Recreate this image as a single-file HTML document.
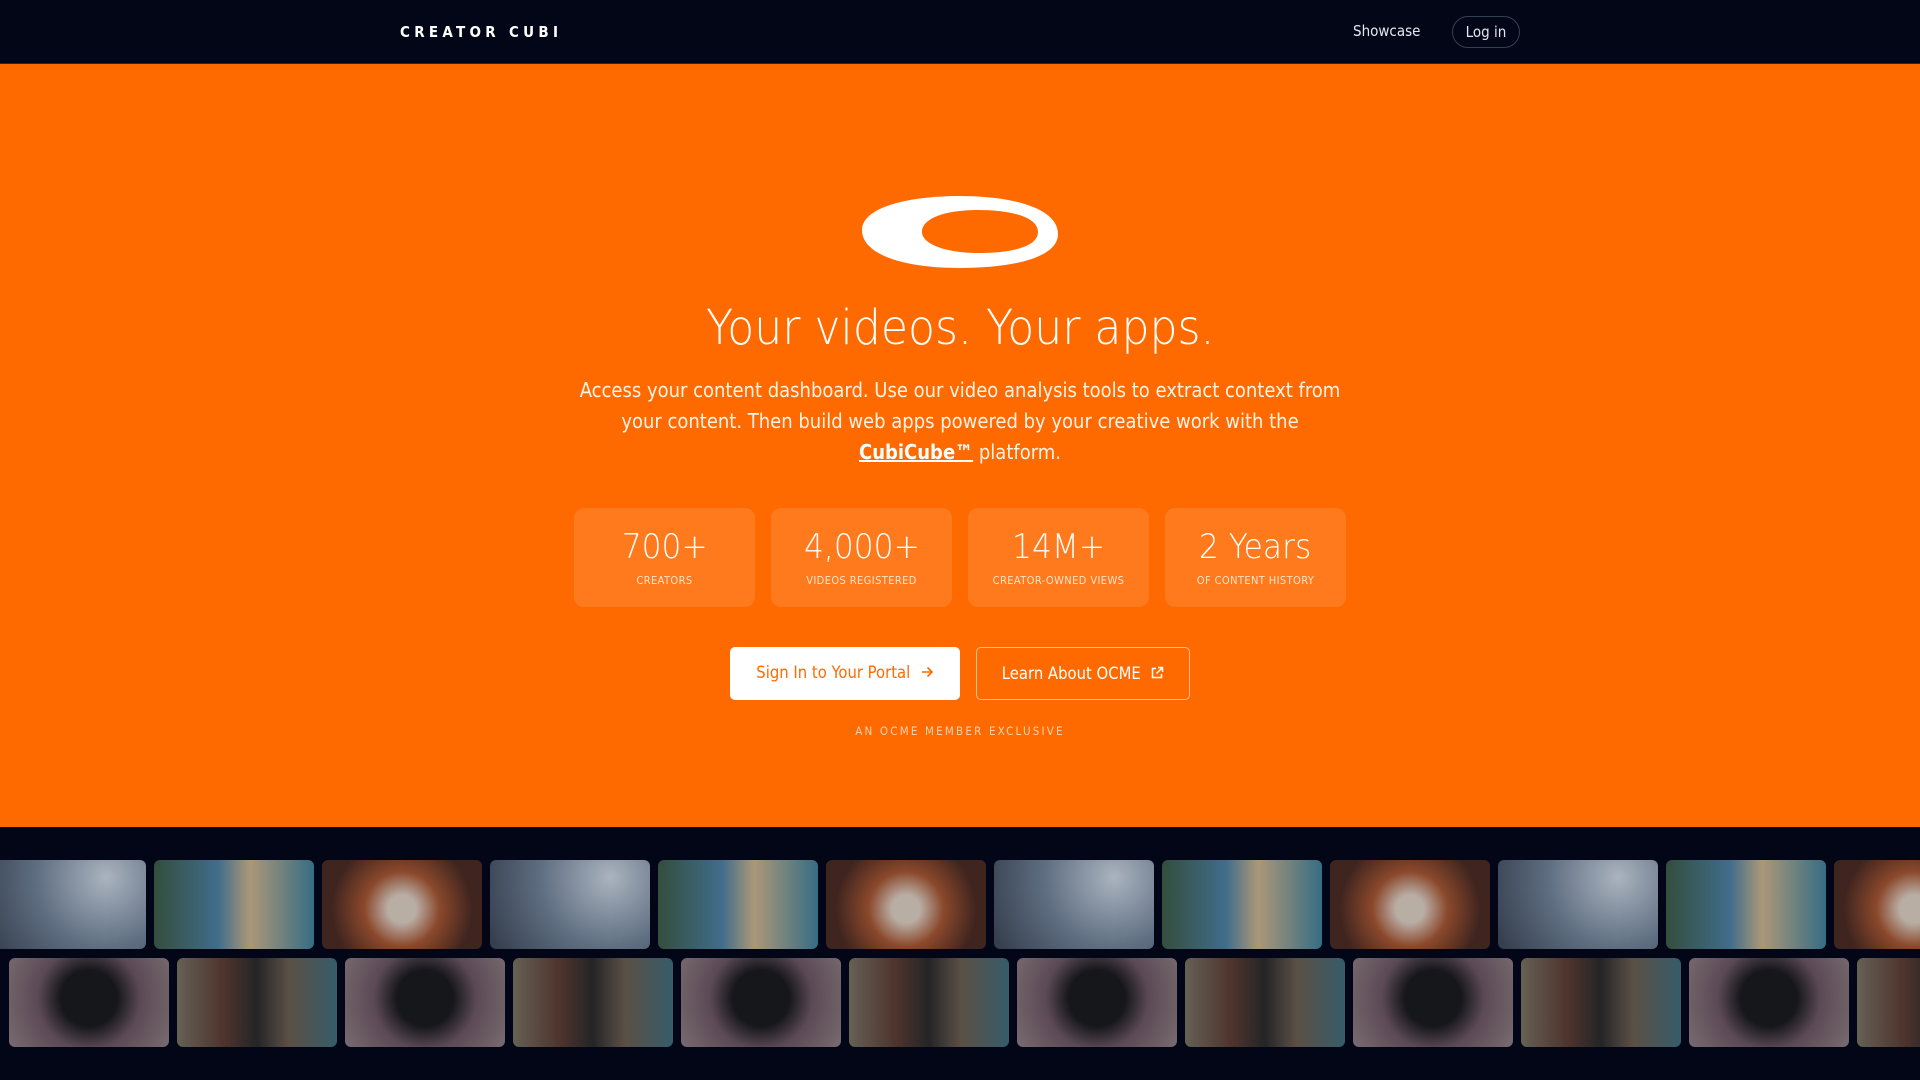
<!DOCTYPE html>
<html><head><meta charset="utf-8"><style>
*{margin:0;padding:0;box-sizing:border-box}
body{width:1920px;height:1080px;overflow:hidden;background:#020617;font-family:"DejaVu Sans Condensed","DejaVu Sans","Liberation Sans",sans-serif;font-stretch:condensed;color:#fff}
.nav{position:absolute;left:0;top:0;width:1920px;height:64px;background:#020617;border-bottom:1px solid #1e293b}
.brand{position:absolute;left:400px;top:23px;font-size:15px;font-weight:bold;letter-spacing:4.3px}
.show{position:absolute;left:1353px;top:22px;font-size:15px;color:#e2e8f0}
.login{position:absolute;left:1452px;top:16px;width:68px;height:32px;border:1px solid #334155;border-radius:16px;font-size:15px;text-align:center;line-height:30px;color:#e2e8f0}
.hero{position:absolute;left:0;top:64px;width:1920px;height:763px;background:#ff6a00}
.logo{position:absolute;left:862px;top:196px}
.light{font-family:"DejaVu Sans",sans-serif;font-stretch:normal;font-weight:200;display:inline-block;transform:scaleX(.92)}
h1{position:absolute;left:0;width:1920px;top:300px;text-align:center;font-weight:200;font-size:48px}
p.lead{position:absolute;left:575px;width:770px;top:375px;text-align:center;font-size:20px;line-height:31px;color:#fff3e8}
p.lead b{text-decoration:underline;color:#fff}
.stat{position:absolute;top:508px;width:181px;height:99px;background:rgba(255,255,255,.11);border-radius:10px;text-align:center}
.stat .n{margin-top:19px;font-size:34px;line-height:40px}
.stat .l{margin-top:7px;font-size:11px;color:#ffe3cc;letter-spacing:.4px}
.btn{position:absolute;top:647px;height:53px;border-radius:5px;font-size:16.5px;line-height:51px;text-align:center}
.b1{left:730px;width:230px;background:#fff;color:#ff6a00}
.b2{left:976px;width:214px;border:1px solid rgba(255,255,255,.55);color:#fff}
.excl{position:absolute;top:724px;left:0;width:1920px;text-align:center;font-size:11.5px;letter-spacing:2.2px;color:#ffd1ad}
.row{position:absolute;left:0;height:89px}
.t{position:absolute;top:0;width:160px;height:89px;border-radius:6px;opacity:.85}
.a{background:radial-gradient(circle at 75% 20%,#c8d2dc,#6f8094 50%,#3b4452)}
.b{background:linear-gradient(90deg,#3d5a44,#4b7fa0 40%,#c9b189 60%,#3f7f96)}
.c{background:radial-gradient(circle at 50% 55%,#d9cbbd 15%,#a3542f 40%,#4a2a20 75%)}
.d{background:radial-gradient(circle at 50% 45%,#1a1a1c 30%,#6b5660 55%,#8e7d80)}
.e{background:linear-gradient(90deg,#77705f,#5a3b2f 30%,#2a2a2a 50%,#6b5d4e 70%,#3f6b77)}
</style></head><body>
<div class="nav"><div class="brand">CREATOR CUBI</div><div class="show">Showcase</div><div class="login">Log in</div></div>
<div class="hero"></div>
<svg class="logo" width="196" height="72" viewBox="0 0 196 72"><path fill="#fff" fill-rule="evenodd" d="M98 0C150 0 196 12 196 38C196 62 150 72 98 72C40 72 0 58 0 34C0 12 44 0 98 0ZM60 36C60 48 84 57 116 57C152 57 176 50 176 36C176 22 152 14 116 14C84 14 60 22 60 36Z"/></svg>
<h1><span class="light">Your videos. Your apps.</span></h1>
<p class="lead">Access your content dashboard. Use our video analysis tools to extract context from your content. Then build web apps powered by your creative work with the <b>CubiCube™</b> platform.</p>
<div class="stat" style="left:574px"><div class="n"><span class="light">700+</span></div><div class="l">CREATORS</div></div>
<div class="stat" style="left:771px"><div class="n"><span class="light">4,000+</span></div><div class="l">VIDEOS REGISTERED</div></div>
<div class="stat" style="left:968px"><div class="n"><span class="light">14M+</span></div><div class="l">CREATOR-OWNED VIEWS</div></div>
<div class="stat" style="left:1165px"><div class="n"><span class="light">2 Years</span></div><div class="l">OF CONTENT HISTORY</div></div>
<div class="btn b1">Sign In to Your Portal &nbsp;<svg width="14" height="14" viewBox="0 0 14 14" style="vertical-align:-1px"><path d="M2 7H12M7.5 2.5L12 7L7.5 11.5" stroke="#ff6a00" stroke-width="1.6" fill="none"/></svg></div>
<div class="btn b2">Learn About OCME &nbsp;<svg width="14" height="14" viewBox="0 0 14 14" style="vertical-align:-1px"><path d="M6 2.5H2.5V11.5H11.5V8M8 1.5H12.5V6M12.5 1.5L6.5 7.5" stroke="#fff" stroke-width="1.5" fill="none"/></svg></div>
<div class="excl">AN OCME MEMBER EXCLUSIVE</div>
<div class="row" style="top:860px">
<div class="t a" style="left:-14px"></div><div class="t b" style="left:154px"></div><div class="t c" style="left:322px"></div><div class="t a" style="left:490px"></div><div class="t b" style="left:658px"></div><div class="t c" style="left:826px"></div><div class="t a" style="left:994px"></div><div class="t b" style="left:1162px"></div><div class="t c" style="left:1330px"></div><div class="t a" style="left:1498px"></div><div class="t b" style="left:1666px"></div><div class="t c" style="left:1834px"></div>
</div>
<div class="row" style="top:958px">
<div class="t d" style="left:9px"></div><div class="t e" style="left:177px"></div><div class="t d" style="left:345px"></div><div class="t e" style="left:513px"></div><div class="t d" style="left:681px"></div><div class="t e" style="left:849px"></div><div class="t d" style="left:1017px"></div><div class="t e" style="left:1185px"></div><div class="t d" style="left:1353px"></div><div class="t e" style="left:1521px"></div><div class="t d" style="left:1689px"></div><div class="t e" style="left:1857px"></div>
</div>
</body></html>
